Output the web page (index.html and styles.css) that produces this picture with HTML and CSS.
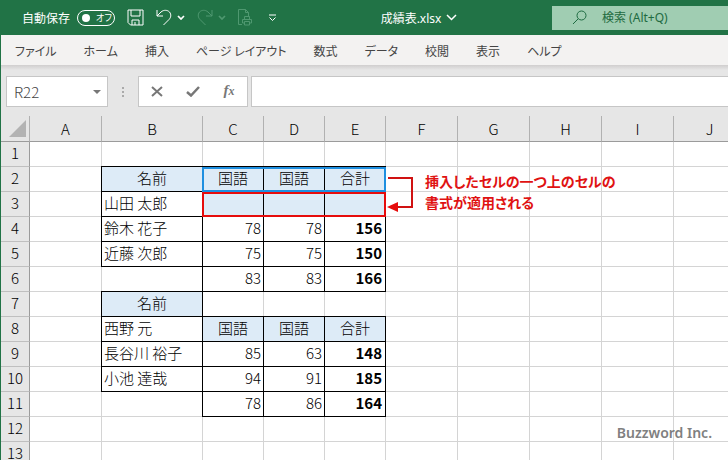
FILE: index.html
```html
<!DOCTYPE html>
<html lang="ja">
<head>
	<meta charset="UTF-8">
	<title>成績表.xlsx</title>
	<link rel="stylesheet" href="styles.css">
</head>
<body>
<div class="window">

	<header class="titlebar">
		<div class="quick">
			<label class="autosave">自動保存
				<span class="switch"><input type="checkbox"><span>オフ</span></span>
			</label>
			<button class="save" aria-label="上書き保存">
				<svg width="17" height="17" viewBox="0 0 17 17"><path d="M1 1h15v15H3.500L1 13.500zM4 1v6h9V1M5 16v-5h7v5M8 16v-3"/></svg>
			</button>
			<button class="undo" aria-label="元に戻す">
				<svg width="16" height="17" viewBox="0 0 16 17"><path d="M1 1v6h6M1 7l4-4c3-2.500 6.500-2 8.500 0c2 2.500 1.500 5.500-.5 7.500L7.500 16"/></svg>
				<svg width="8" height="5" viewBox="0 0 8 5"><path d="M1 1l3 3l3-3" stroke-width="1.700"/></svg>
			</button>
			<button class="redo" aria-label="やり直し" disabled>
				<svg width="16" height="17" viewBox="0 0 16 17"><path d="M15 1v6H9M15 7l-4-4c-3-2.500-6.500-2-8.500 0c-2 2.500-1.500 5.500.5 7.500L8.500 16"/></svg>
				<svg width="8" height="5" viewBox="0 0 8 5"><path d="M1 1l3 3l3-3" stroke-width="1.700"/></svg>
			</button>
			<button class="print" aria-label="印刷プレビュー" disabled>
				<svg width="15" height="17" viewBox="0 0 15 17"><path d="M4 15.500H.5V.5h7l3 3V7M7.500.5v3h3M6.500 10.500v-3h5v3M6.500 14h-2v-3.500h9V14h-2M6.500 12.500h5v3.500h-5z"/></svg>
			</button>
			<button class="customize" aria-label="クイック アクセス ツール バーのユーザー設定">
				<svg width="9" height="8" viewBox="0 0 9 8"><path d="M1 1h7M1.500 3.500l3 3l3-3"/></svg>
			</button>
		</div>
		<button class="filename">成績表.xlsx
			<svg width="11" height="7" viewBox="0 0 11 7"><path d="M1 1l4.500 4.500L10 1" stroke-width="1.500"/></svg>
		</button>
		<label class="search">
			<svg width="15" height="15" viewBox="0 0 15 15"><circle cx="9.500" cy="5.500" r="4.500"/><path d="M6.200 8.800L1 14"/></svg>
			<input type="text" placeholder="検索 (Alt+Q)" aria-label="検索">
		</label>
	</header>

	<nav class="tabs">
		<a href="#">ファイル</a>
		<a href="#">ホーム</a>
		<a href="#">挿入</a>
		<a href="#">ページ レイアウト</a>
		<a href="#">数式</a>
		<a href="#">データ</a>
		<a href="#">校閲</a>
		<a href="#">表示</a>
		<a href="#">ヘルプ</a>
	</nav>

	<div class="formula-bar">
		<div class="name-box">
			<input type="text" value="R22" aria-label="名前ボックス">
			<button aria-label="名前の一覧"><svg width="8" height="4" viewBox="0 0 8 4"><path d="M0 0h8L4 4z"/></svg></button>
		</div>
		<svg class="grip" width="2" height="10" viewBox="0 0 2 10"><path d="M0 0h2v2H0zM0 4h2v2H0zM0 8h2v2H0z"/></svg>
		<div class="entry">
			<button aria-label="キャンセル"><svg width="12" height="11" viewBox="0 0 12 11"><path d="M1 1l10 9M11 1L1 10"/></svg></button>
			<button aria-label="入力"><svg width="14" height="11" viewBox="0 0 14 11"><path d="M1 6l4 3.500L13 1" stroke-width="2.500"/></svg></button>
			<button class="fx" aria-label="関数の挿入"><i>f</i><i class="x">x</i></button>
		</div>
		<input class="formula" type="text" aria-label="数式バー">
	</div>

	<main class="sheet">
		<table>
			<colgroup>
				<col class="num"><col><col class="name"><col class="score"><col class="score"><col class="score"><col><col><col><col><col>
			</colgroup>
			<thead>
				<tr>
					<th class="corner"><svg width="17" height="17" viewBox="0 0 17 17"><path d="M17 0v17H0z"/></svg></th>
					<th>A</th><th>B</th><th>C</th><th>D</th><th>E</th><th>F</th><th>G</th><th>H</th><th>I</th><th>J</th>
				</tr>
			</thead>
			<tbody>
				<tr><th>1</th><td></td><td></td><td></td><td></td><td></td><td></td><td></td><td></td><td></td><td></td></tr>
				<tr><th>2</th><td></td><td class="box head">名前</td><td class="box head">国語</td><td class="box head">国語</td><td class="box head">合計</td><td></td><td></td><td></td><td></td><td></td></tr>
				<tr><th>3</th><td></td><td class="box">山田 太郎</td><td class="box head"></td><td class="box head"></td><td class="box head"></td><td></td><td></td><td></td><td></td><td></td></tr>
				<tr><th>4</th><td></td><td class="box">鈴木 花子</td><td class="box n">78</td><td class="box n">78</td><td class="box n total">156</td><td></td><td></td><td></td><td></td><td></td></tr>
				<tr><th>5</th><td></td><td class="box">近藤 次郎</td><td class="box n">75</td><td class="box n">75</td><td class="box n total">150</td><td></td><td></td><td></td><td></td><td></td></tr>
				<tr><th>6</th><td></td><td></td><td class="box n">83</td><td class="box n">83</td><td class="box n total">166</td><td></td><td></td><td></td><td></td><td></td></tr>
				<tr><th>7</th><td></td><td class="box head">名前</td><td></td><td></td><td></td><td></td><td></td><td></td><td></td><td></td></tr>
				<tr><th>8</th><td></td><td class="box">西野 元</td><td class="box head">国語</td><td class="box head">国語</td><td class="box head">合計</td><td></td><td></td><td></td><td></td><td></td></tr>
				<tr><th>9</th><td></td><td class="box">長谷川 裕子</td><td class="box n">85</td><td class="box n">63</td><td class="box n total">148</td><td></td><td></td><td></td><td></td><td></td></tr>
				<tr><th>10</th><td></td><td class="box">小池 達哉</td><td class="box n">94</td><td class="box n">91</td><td class="box n total">185</td><td></td><td></td><td></td><td></td><td></td></tr>
				<tr><th>11</th><td></td><td></td><td class="box n">78</td><td class="box n">86</td><td class="box n total">164</td><td></td><td></td><td></td><td></td><td></td></tr>
				<tr><th>12</th><td></td><td></td><td></td><td></td><td></td><td></td><td></td><td></td><td></td><td></td></tr>
				<tr><th>13</th><td></td><td></td><td></td><td></td><td></td><td></td><td></td><td></td><td></td><td></td></tr>
			</tbody>
		</table>

		<div class="mark source"></div>
		<div class="mark inserted"></div>
		<svg class="arrow" width="28" height="36" viewBox="0 0 28 36">
			<path class="line" d="M1 3h24v29H9"/>
			<path class="tip" d="M0 32l11-5v10z"/>
		</svg>
		<p class="note">挿入したセルの一つ上のセルの<br>書式が適用される</p>
		<p class="credit">Buzzword Inc.</p>
	</main>

</div>
</body>
</html>
```

FILE: styles.css
```css
* {
	box-sizing: border-box;
}

body {
	margin: 0;
	font-family: "Noto Sans CJK JP", sans-serif;
	font-size: 12px;
	color: #444;
}

button, input {
	margin: 0;
	padding: 0;
	border: 0;
	background: none;
	font: inherit;
	color: inherit;
}

svg {
	display: block;
	flex: none;
	fill: none;
	stroke: currentColor;
}

.window {
	display: flex;
	flex-direction: column;
	height: 100vh;
	overflow: hidden;
	border-left: 1px solid #217346;
	background: #e6e6e6;
}

/* title bar */
.titlebar {
	display: flex;
	align-items: center;
	flex: none;
	height: 35px;
	padding-left: 21px;
	background: #217346;
	color: #fff;
	font-family: "Noto Sans", "Noto Sans CJK JP", sans-serif;
}

.quick, .quick button, .autosave, .switch, .filename, .search {
	display: flex;
	align-items: center;
}

.quick {
	gap: 12px;
	padding-right: 9px;
}

.quick button {
	gap: 5px;
}

.quick .redo, .quick .print {
	color: #4f9870;
}

.quick .customize {
	padding-left: 3px;
}

.autosave {
	gap: 7px;
}

.switch {
	gap: 6px;
	width: 38px;
	height: 16px;
	padding-left: 4px;
	border: 1px solid #fff;
	border-radius: 8px;
	font-size: 9px;
	font-feature-settings: "palt";
}

.switch input {
	appearance: none;
	width: 8px;
	height: 8px;
	border-radius: 50%;
	background: #fff;
}

.filename {
	flex: 1;
	justify-content: center;
	gap: 5px;
}

.search {
	gap: 15px;
	width: 176px;
	height: 24px;
	padding-left: 20px;
	background: #a0cdb2;
	color: #1e6b41;
}

.search input {
	flex: 1;
	min-width: 0;
}

.search input::placeholder {
	color: #1e6b41;
	opacity: 1;
}

/* ribbon tabs */
.tabs {
	display: flex;
	align-items: center;
	flex: none;
	gap: 27px;
	height: 30px;
	padding-left: 14px;
	background: #f3f2f1;
	font-feature-settings: "palt";
}

.tabs a {
	color: #444;
	text-decoration: none;
	white-space: nowrap;
}

/* formula bar */
.formula-bar {
	display: flex;
	align-items: center;
	flex: none;
	padding: 11px 0 9px 5px;
	background: linear-gradient(#d0cece, #e6e6e6 5px);
}

.name-box, .entry, .formula {
	height: 31px;
	border: 1px solid #c6c6c6;
	background: #fff;
}

.name-box {
	display: flex;
	width: 102px;
	padding: 0 6px 0 7px;
	font-size: 15px;
	font-weight: 300;
}

.name-box input {
	flex: 1;
	min-width: 0;
}

.name-box svg, .grip {
	fill: #777;
	stroke: none;
}

.grip {
	margin: 0 14px;
	fill: #aaa;
}

.entry {
	display: flex;
	width: 110px;
}

.entry button {
	display: flex;
	flex: 1;
	align-items: center;
	justify-content: center;
	color: #777;
}

.entry svg {
	stroke-width: 2;
}

.entry .fx {
	padding-bottom: 3px;
	font: bold 15px "Liberation Serif", serif;
}

.fx .x {
	font-size: 12px;
	padding-top: 3px;
}

.formula {
	flex: 1;
	min-width: 0;
	margin-left: 3px;
	border-right: 0;
}

/* worksheet */
.sheet {
	position: relative;
	flex: 1;
	overflow: hidden;
	background: #fff;
}

table {
	table-layout: fixed;
	width: 0;
	border-spacing: 0;
	font-size: 15px;
	font-weight: 300;
	line-height: 22px;
	color: #000;
}

col {
	width: 72px;
}

.num {
	width: 29px;
}

.name {
	width: 101px;
}

.score {
	width: 61px;
}

th, td {
	height: 25px;
	padding: 0 2px;
	border-right: 1px solid #d4d4d4;
	border-bottom: 1px solid #d4d4d4;
	vertical-align: top;
	white-space: nowrap;
}

th {
	padding: 0;
	border-right-color: #9b9b9b;
	border-bottom-color: #bfbfbf;
	background: #e6e6e6;
	font-weight: 300;
}

thead th {
	height: 26px;
	border-right-color: #b1b1b1;
	border-bottom-color: #9b9b9b;
	vertical-align: middle;
}

.corner svg {
	margin-left: 8px;
	fill: #b3b3b3;
	stroke: none;
}

.box {
	border-color: #000;
	box-shadow: -1px 0 0 #000, 0 -1px 0 #000, -1px -1px 0 #000;
}

.head {
	background: #ddebf7;
	text-align: center;
}

.n {
	text-align: right;
}

.total {
	padding-right: 3px;
	font-weight: bold;
}

/* annotations over the cells */
.mark {
	position: absolute;
	left: 201px;
	width: 184px;
	height: 25px;
	border: 2px solid;
}

.source {
	top: 51px;
	border-color: #1e8fe0;
}

.inserted {
	top: 76px;
	border-color: #e60c0c;
}

.arrow {
	position: absolute;
	top: 59px;
	left: 386px;
	overflow: visible;
}

.line {
	stroke: #d01212;
	stroke-width: 2;
}

.tip {
	fill: #e60c0c;
	stroke: none;
}

.note {
	position: absolute;
	top: 55px;
	left: 424px;
	margin: 0;
	font-size: 14px;
	font-weight: bold;
	line-height: 21px;
	font-feature-settings: "palt";
	color: #e01212;
	white-space: nowrap;
}

.credit {
	position: absolute;
	right: 16px;
	bottom: 18px;
	margin: 0;
	font: 600 14px "Noto Sans", sans-serif;
	color: #808080;
}
```
